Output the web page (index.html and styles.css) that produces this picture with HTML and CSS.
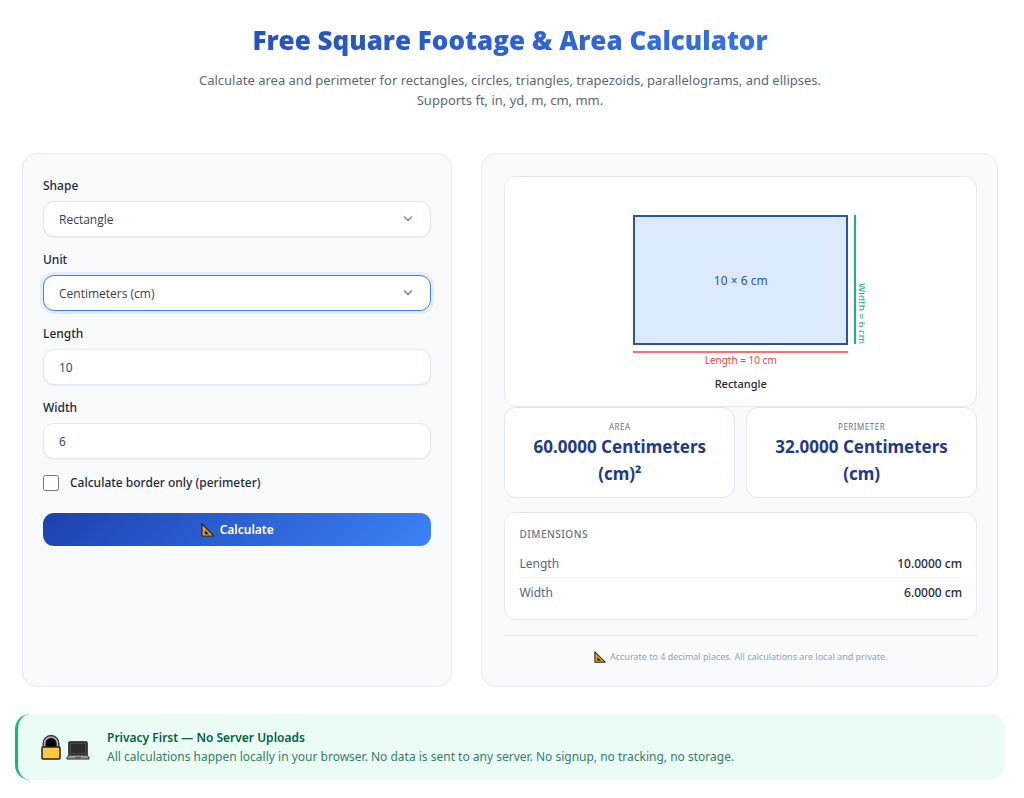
FILE: index.html
```
<!DOCTYPE html>
<html lang="en">
<head>
    <meta charset="UTF-8">
    <meta name="viewport" content="width=device-width, initial-scale=1.0">
    <title>Free Square Footage &amp; Area Calculator</title>
    <link rel="stylesheet" href="styles.css">
</head>
<body>

    <svg class="sprite" aria-hidden="true">
        <symbol id="icon-ruler" viewBox="0 0 14 14">
            <path d="M1 1 L13 13 H1 Z" fill="#f0a30a" stroke="#2b2b2b" stroke-width="1.2" stroke-linejoin="round"/>
            <path d="M4 7.6 L7.6 11 H4 Z" fill="#111" stroke="#2b2b2b" stroke-width="0.6"/>
        </symbol>
    </svg>

    <div class="page">
        <header class="hero">
            <h1>Free Square Footage &amp; Area Calculator</h1>
            <p>Calculate area and perimeter for rectangles, circles, triangles, trapezoids, parallelograms, and ellipses. Supports ft, in, yd, m, cm, mm.</p>
        </header>

        <main class="calculator">
            <form class="panel form" id="calcForm">
                <div class="field">
                    <label for="shape">Shape</label>
                    <div class="select-wrap">
                        <select id="shape">
                            <option>Rectangle</option>
                            <option>Circle</option>
                            <option>Triangle</option>
                            <option>Trapezoid</option>
                            <option>Parallelogram</option>
                            <option>Ellipse</option>
                        </select>
                        <svg class="chevron" viewBox="0 0 10 6"><path d="M1.500 1l3.500 3.500 3.500-3.500" fill="none" stroke="#7b8aa0" stroke-width="1.5" stroke-linecap="round" stroke-linejoin="round"/></svg>
                    </div>
                </div>
                <div class="field">
                    <label for="unit">Unit</label>
                    <div class="select-wrap">
                        <select id="unit" class="active">
                            <option>Centimeters (cm)</option>
                            <option>Feet (ft)</option>
                            <option>Inches (in)</option>
                            <option>Yards (yd)</option>
                            <option>Meters (m)</option>
                            <option>Millimeters (mm)</option>
                        </select>
                        <svg class="chevron" viewBox="0 0 10 6"><path d="M1.500 1l3.500 3.500 3.500-3.500" fill="none" stroke="#7b8aa0" stroke-width="1.5" stroke-linecap="round" stroke-linejoin="round"/></svg>
                    </div>
                </div>
                <div class="field">
                    <label for="length">Length</label>
                    <input type="text" inputmode="decimal" id="length" value="10">
                </div>
                <div class="field">
                    <label for="width">Width</label>
                    <input type="text" inputmode="decimal" id="width" value="6">
                </div>
                <div class="check">
                    <input type="checkbox" id="borderOnly">
                    <label for="borderOnly">Calculate border only (perimeter)</label>
                </div>
                <button type="button" class="btn">
                    <svg class="icon"><use href="#icon-ruler"/></svg>
                    Calculate
                </button>
            </form>

            <section class="panel results">
                <div class="preview">
                    <div class="figure">
                        <div class="shape-box">10 × 6 cm</div>
                        <div class="side"><span>Width = 6 cm</span></div>
                        <div class="base">Length = 10 cm</div>
                    </div>
                    <p class="shape-name">Rectangle</p>
                </div>

                <div class="stats">
                    <div class="stat">
                        <div class="stat-label">Area</div>
                        <div class="stat-value">60.0000 Centimeters (cm)²</div>
                    </div>
                    <div class="stat">
                        <div class="stat-label">Perimeter</div>
                        <div class="stat-value">32.0000 Centimeters (cm)</div>
                    </div>
                </div>

                <div class="dimensions">
                    <h2>Dimensions</h2>
                    <table>
                        <tr><th scope="row">Length</th><td>10.0000 cm</td></tr>
                        <tr><th scope="row">Width</th><td>6.0000 cm</td></tr>
                    </table>
                </div>

                <p class="footnote">
                    <svg class="icon"><use href="#icon-ruler"/></svg>
                    Accurate to 4 decimal places. All calculations are local and private.
                </p>
            </section>
        </main>

        <aside class="privacy">
            <div class="privacy-icons">
                <svg class="lock" viewBox="0 0 20 25">
                    <path d="M3.500 12V8.500a6.500 6.500 0 0 1 13 0V12" fill="#000" stroke="#222" stroke-width="4"/>
                    <path d="M3.500 12V8.500a6.500 6.500 0 0 1 13 0V12" fill="none" stroke="#b4b4b4" stroke-width="1.600"/>
                    <rect x="1" y="12" width="18" height="12" rx="1" fill="#ffc83d" stroke="#222" stroke-width="1.500"/>
                </svg>
                <svg class="laptop" viewBox="0 0 24 19">
                    <rect x="3" y="1" width="18" height="13" rx="1" fill="#222" stroke="#111" stroke-width="1.500"/>
                    <rect x="4" y="2" width="16" height="11" fill="#2c2c2c" stroke="#777" stroke-width="0.700"/>
                    <path d="M3 14h18l2 2.500v1.500H1v-1.500z" fill="#999" stroke="#222"/>
                    <path d="M9 16.500h6" stroke="#555"/>
                </svg>
            </div>
            <div>
                <strong>Privacy First — No Server Uploads</strong>
                <p>All calculations happen locally in your browser. No data is sent to any server. No signup, no tracking, no storage.</p>
            </div>
        </aside>
    </div>

</body>
</html>
```

FILE: styles.css
```
* {
    box-sizing: border-box;
}
body {
    margin: 0;
    font-family: "Noto Sans", "Open Sans", sans-serif;
    font-size: 12px;
    line-height: 19px;
    color: #1e293b;
    background: #fff;
}
h1, h2, p {
    margin: 0;
}
.sprite {
    display: none;
}
.page {
    padding: 20px 19px 18px 15px;
}

/* header */
.hero {
    text-align: center;
    margin-bottom: 43px;
}
.hero h1 {
    font-family: "Open Sans", sans-serif;
    font-size: 26px;
    line-height: 40px;
    font-weight: 800;
    margin-bottom: 10px;
    background: linear-gradient(135deg, #1e40af, #3b82f6);
    -webkit-background-clip: text;
    background-clip: text;
    color: transparent;
}
.hero p {
    max-width: 660px;
    margin: 0 auto;
    font-size: 13px;
    line-height: 20px;
    color: #5b6879;
}

/* two columns */
.calculator {
    display: grid;
    grid-template-columns: 1fr 1.2fr;
    gap: 29px;
    padding: 0 7px;
    margin-bottom: 27px;
}
.panel {
    min-width: 0;
    background: #f8fafc;
    border: 1px solid #e6eaf3;
    border-radius: 15px;
}
.form {
    padding: 22px 20px;
}
.results {
    padding: 22px 20px 22px 22px;
}

/* form */
.field {
    margin-bottom: 13px;
}
.field label {
    display: block;
    margin-bottom: 6px;
    font-weight: 500;
}
.field input,
.field select {
    display: block;
    width: 100%;
    height: 36px;
    padding: 0 15px;
    font-family: "Open Sans", sans-serif;
    font-size: 12px;
    color: #334155;
    background: #fff;
    border: 1px solid #e2e8f0;
    border-radius: 11px;
    box-shadow: 0 1px 2px rgba(0, 0, 0, 0.05);
    appearance: none;
    outline: none;
}
.field .active,
.field input:focus,
.field select:focus {
    border-color: #3b82f6;
    box-shadow: 0 0 0 3px rgba(59, 130, 246, 0.1);
}
.select-wrap {
    position: relative;
}
.chevron {
    position: absolute;
    right: 18px;
    top: 15px;
    width: 10px;
    height: 6px;
    pointer-events: none;
}
.check {
    display: flex;
    align-items: center;
    gap: 11px;
    margin: 14px 0 21px;
    font-weight: 500;
}
.check input {
    width: 16px;
    height: 16px;
    margin: 0;
}
.btn {
    display: flex;
    align-items: center;
    justify-content: center;
    gap: 5px;
    width: 100%;
    height: 33px;
    font-family: inherit;
    font-size: 12px;
    font-weight: 600;
    color: #fff;
    background: linear-gradient(135deg, #1e40af, #3b82f6);
    border: none;
    border-radius: 11px;
    cursor: pointer;
}
.icon {
    width: 14px;
    height: 14px;
}

/* results */
.preview {
    display: flex;
    flex-direction: column;
    align-items: center;
    padding: 38px 15px 13px;
    background: #fff;
    border: 1px solid #e6eaf3;
    border-radius: 12px;
}
.figure {
    position: relative;
    width: 215px;
    margin-bottom: 7px;
}
.shape-box {
    display: flex;
    align-items: center;
    justify-content: center;
    height: 130px;
    color: #3451a0;
    background: #dbeafe;
    border: 2px solid #34519d;
}
.side {
    position: absolute;
    left: 221px;
    top: 0;
    height: 129px;
    padding-left: 3px;
    writing-mode: vertical-rl;
    font-size: 10px;
    line-height: 6px;
    text-align: right;
    color: #10b981;
    border-left: 2px solid #10b981;
}
.side span {
    display: block;
    width: 6px;
    overflow: hidden;
}
.base {
    margin-top: 6px;
    font-size: 10px;
    line-height: 14px;
    text-align: center;
    color: #ef4444;
    border-top: 2px solid #f87171;
}
.shape-name {
    font-size: 11px;
    font-weight: 500;
}
.stats {
    display: grid;
    grid-template-columns: 1fr 1fr;
    gap: 11px;
    margin-bottom: 14px;
}
.stat {
    padding: 12px 15px 10px;
    text-align: center;
    background: #fff;
    border: 1px solid #e2e8f0;
    border-radius: 12px;
}
.stat-label {
    font-size: 8px;
    line-height: 13px;
    letter-spacing: 0.5px;
    text-transform: uppercase;
    color: #64748b;
}
.stat-value {
    font-size: 17px;
    line-height: 27px;
    font-weight: 700;
    color: #1e3a8a;
}
.dimensions {
    padding: 13px 14px;
    background: #fff;
    border: 1px solid #e6eaf3;
    border-radius: 12px;
}
.dimensions h2 {
    margin-bottom: 7px;
    font-size: 10px;
    line-height: 16px;
    font-weight: 500;
    letter-spacing: 0.5px;
    text-transform: uppercase;
    color: #64748b;
}
.dimensions table {
    width: 100%;
    border-collapse: collapse;
}
.dimensions th,
.dimensions td {
    padding: 5px 0 4px;
    text-align: left;
}
.dimensions th {
    font-weight: 400;
    color: #56657a;
}
.dimensions td {
    text-align: right;
    font-weight: 500;
}
.dimensions tr + tr {
    border-top: 1px solid #f1f5f9;
}
.footnote {
    display: flex;
    align-items: center;
    justify-content: center;
    gap: 4px;
    margin-top: 15px;
    padding-top: 13px;
    font-size: 9px;
    line-height: 15px;
    color: #94a3b8;
    border-top: 1px solid #e2e8f0;
}
.footnote .icon {
    width: 12px;
    height: 12px;
}

/* privacy notice */
.privacy {
    display: flex;
    align-items: center;
    gap: 17px;
    padding: 14px 23px;
    color: #065f46;
    background: #eafcf4;
    border-left: 3px solid #10b981;
    border-radius: 15px;
}
.privacy-icons {
    display: flex;
    align-items: flex-end;
    gap: 5px;
}
.lock {
    width: 20px;
    height: 25px;
}
.laptop {
    width: 24px;
    height: 19px;
}
.privacy strong {
    display: block;
    font-weight: 600;
}
.privacy p {
    color: #37806b;
}
```
